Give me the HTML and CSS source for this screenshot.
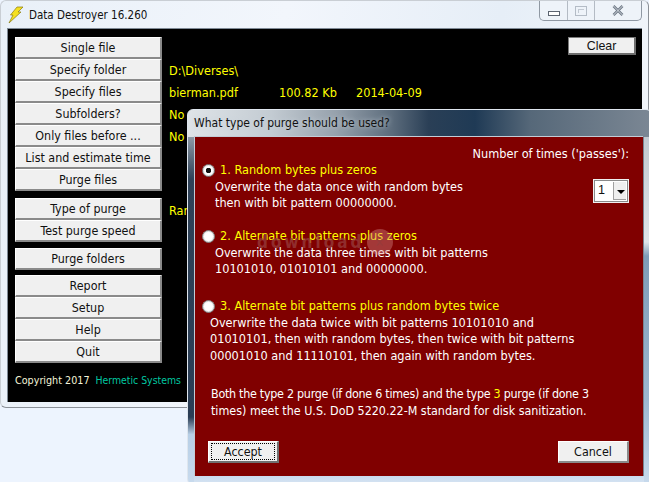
FILE: index.html
```html
<!DOCTYPE html>
<html lang="en">
<head>
    <meta charset="UTF-8">
    <title>Data Destroyer</title>
    <link rel="stylesheet" href="styles.css">
</head>
<body>

<div class="main-window">
    <div class="titlebar">
        <svg class="app-icon" width="16" height="18" viewBox="0 0 16 18">
            <path d="M9 1 L15 1 L10 6 L13 6 L1 17 L5 9 L2.5 9 Z" fill="#f5e020" stroke="#8a7a10" stroke-width="0.7"/>
        </svg>
        <span class="app-title">Data Destroyer 16.260</span>
        <div class="win-controls">
            <div class="win-btn min"><i></i></div>
            <div class="win-btn max"><i></i></div>
            <div class="win-btn close">
                <svg width="12" height="11" viewBox="0 0 12 11">
                    <path d="M1.5 1 L10.5 10 M10.5 1 L1.5 10" stroke="#6c7684" stroke-width="2.6"/>
                    <path d="M1.5 1 L10.5 10 M10.5 1 L1.5 10" stroke="#eef2f6" stroke-width="0.8"/>
                </svg>
            </div>
        </div>
    </div>

    <div class="panel">
        <div class="side">
            <div class="btn-group">
                <div class="btn">Single file</div>
                <div class="btn">Specify folder</div>
                <div class="btn">Specify files</div>
                <div class="btn">Subfolders?</div>
                <div class="btn">Only files before ...</div>
                <div class="btn">List and estimate time</div>
                <div class="btn">Purge files</div>
            </div>
            <div class="btn-group">
                <div class="btn">Type of purge</div>
                <div class="btn">Test purge speed</div>
            </div>
            <div class="btn-group">
                <div class="btn">Purge folders</div>
            </div>
            <div class="btn-group">
                <div class="btn">Report</div>
                <div class="btn">Setup</div>
                <div class="btn">Help</div>
                <div class="btn">Quit</div>
            </div>
            <div class="copyright">Copyright 2017<span class="company">Hermetic Systems</span></div>
        </div>

        <div class="info">
            <div class="info-row clear-row"><div class="btn clear">Clear</div></div>
            <div class="info-row">D:\Diverses\</div>
            <div class="info-row file-row">
                <span class="file-name">bierman.pdf</span>
                <span class="file-size">100.82 Kb</span>
                <span>2014-04-09</span>
            </div>
            <div class="info-row">No</div>
            <div class="info-row">No</div>
            <div class="info-row"></div>
            <div class="info-row"></div>
            <div class="info-row purge-type">Random</div>
        </div>
    </div>
</div>

<div class="dialog">
    <div class="dialog-title">What type of purge should be used?</div>
    <div class="dialog-body">
        <div class="passes">Number of times ('passes'):</div>

        <div class="option first">
            <div class="option-head"><span class="radio checked"></span>1. Random bytes plus zeros</div>
            <p class="indent">Overwrite the data once with random bytes<br>then with bit pattern 00000000.</p>
        </div>

        <div class="combo">
            <span class="combo-value">1</span>
            <span class="combo-arrow"></span>
        </div>

        <div class="option second">
            <div class="option-head"><span class="radio"></span>2. Alternate bit patterns plus zeros</div>
            <p class="indent">Overwrite the data three times with bit patterns<br>10101010, 01010101 and 00000000.</p>
        </div>

        <div class="option third">
            <div class="option-head"><span class="radio"></span>3. Alternate bit patterns plus random bytes twice</div>
            <p>Overwrite the data twice with bit patterns 10101010 and<br>01010101, then with random bytes, then twice with bit patterns<br>00001010 and 11110101, then again with random bytes.</p>
        </div>

        <p class="standard"><span class="tight">Both the type 2 purge (if done 6 times) and the type <span class="hl">3</span> purge (if done 3</span><br>times) meet the U.S. DoD 5220.22-M standard for disk sanitization.</p>

        <div class="dialog-actions">
            <div class="btn accept"><span>Accept</span></div>
            <div class="btn cancel">Cancel</div>
        </div>

        <div class="watermark">download<span class="wm-dot">✕</span></div>
    </div>
</div>

</body>
</html>
```

FILE: styles.css
```css
*{
    margin: 0;
    padding: 0;
    box-sizing: border-box;
}

body{
    position: relative;
    width: 649px;
    height: 482px;
    overflow: hidden;
    background-color: #edf4fe;
    font-family: "DejaVu Sans Condensed", "DejaVu Sans", sans-serif;
    font-size: 12.6px;
    color: #fff;
}

/* main window */
.main-window{
    position: absolute;
    top: 0;
    left: 0;
    width: 649px;
    height: 408px;
    padding: 0 6px;
    background: linear-gradient(100deg, #e9f0f8 0%, #f2f6fc 40%, #e6eef7 70%, #f4f7fb 100%);
    border: 1px solid #8b9097;
    border-top-color: #c9ced4;
    border-left-color: #c9ced4;
    border-radius: 6px;
}

.titlebar{
    display: flex;
    align-items: center;
    height: 27px;
    color: #111;
}

.app-icon{
    margin: 0 5px 0 1px;
}

.app-title{
    font-size: 11.5px;
}

.win-controls{
    display: flex;
    align-self: flex-start;
    margin-left: auto;
    margin-right: 0;
    height: 20px;
    border: 1px solid #8f98a3;
    border-top: 0;
    border-radius: 0 0 5px 5px;
    background-color: #eef3f9;
}

.win-btn{
    display: flex;
    align-items: center;
    justify-content: center;
    border-right: 1px solid #b4bbc4;
}

.win-btn:last-child{
    border-right: 0;
}

.min{
    width: 28px;
}

.min i{
    width: 12px;
    height: 5px;
    margin-top: 6px;
    background-color: #fff;
    border: 1px solid #5c6470;
}

.max{
    width: 27px;
}

.max i{
    width: 12px;
    height: 10px;
    border: 1px solid #b4bcc6;
    box-shadow: inset 2px 2px 0 #eef3f9, inset -2px -2px 0 #eef3f9, inset 3px 3px 0 #c2c9d2;
}

.close{
    width: 46px;
}

.panel{
    display: flex;
    height: 374px;
    padding: 8px 8px 8px 7px;
    background-color: #000;
    border: 1px solid #7f8a96;
    border-width: 1px 0 0 1px;
}

/* buttons */
.side{
    display: flex;
    flex-direction: column;
    flex: none;
    width: 147px;
}

.btn-group{
    display: flex;
    flex-direction: column;
    margin-bottom: 6px;
}

.btn-group:first-child{
    margin-bottom: 7px;
}

.btn-group:nth-child(3){
    margin-bottom: 5px;
}

.btn{
    display: flex;
    align-items: center;
    justify-content: center;
    height: 22px;
    background-color: #f0f0f0;
    border: 1px solid #fff;
    border-right: 2px solid #8a8a8a;
    border-bottom: 2px solid #8a8a8a;
    color: #111;
    font-size: 12.4px;
}

.copyright{
    margin-top: 5px;
    white-space: nowrap;
    font-size: 10.7px;
    color: #f4f4d8;
}

.company{
    margin-left: 6px;
    font-size: 10.4px;
    color: #00c8a0;
}

/* yellow values beside the buttons */
.info{
    flex: 1;
    margin-left: 7px;
    color: #ffff00;
}

.info-row{
    display: flex;
    align-items: center;
    height: 22px;
}

.clear-row{
    align-items: flex-start;
    justify-content: flex-end;
    margin-right: -2px;
}

.clear{
    width: 68px;
    height: 18px;
    border: 1px solid #fff;
    border-top-color: #7a7a7a;
    border-left-color: #7a7a7a;
    border-right: 2px solid #6e6e6e;
    border-bottom: 2px solid #6e6e6e;
    font-family: "Liberation Sans", sans-serif;
}

.file-name{
    width: 110px;
}

.file-size{
    width: 77px;
}

.purge-type{
    margin-top: 8px;
}

/* purge dialog */
.dialog{
    position: absolute;
    top: 109px;
    left: 187px;
    width: 465px;
    height: 376px;
    padding: 0 8px 8px 6px;
    background:
        linear-gradient(180deg, #8d99a5 0, #2f4258 12%, #2a3d55 80%, #b8cfe6 85%, #c9dbee 100%) 0 27px / 6px 350px no-repeat,
        linear-gradient(180deg, #c2c9d0 0, #dfe5ea 30%, #7f9db8 34%, #9db8d0 75%, #c9dbee 100%) 456px 27px / 9px 350px no-repeat,
        linear-gradient(180deg, #c9dbee, #d9e6f3) 0 366px / 100% 10px no-repeat,
        linear-gradient(90deg, #dfe4e8 0%, #c3cbd2 18%, #96a1ac 32%, #5c6c7c 44%, #2a3f56 52%, #1f3a55 62%, #566879 74%, #7b8794 100%);
    border: 1px solid #dfe6ee;
    border-radius: 6px;
}

.dialog-title{
    display: flex;
    align-items: center;
    height: 26px;
    font-size: 12px;
    color: #111;
    text-shadow: 0 0 5px #c9d3dc;
}

.dialog-body{
    position: relative;
    height: 340px;
    width: 449px;
    background-color: #800000;
    border: 1px solid #c3ccd6;
    border-width: 1px 0 0 1px;
}

.passes{
    position: absolute;
    top: 9px;
    right: 14px;
}

.option{
    position: absolute;
    left: 7px;
    line-height: 16.5px;
}

.first{
    top: 25px;
}

.second{
    top: 91px;
}

.third{
    top: 161px;
}

.option-head{
    display: flex;
    align-items: center;
    color: #ffff00;
}

.radio{
    width: 13px;
    height: 13px;
    margin-right: 5px;
    flex: none;
    border-radius: 50%;
    background-color: #fff;
    border: 1px solid #7d7d7d;
    box-shadow: inset 0 0 0 1px #e2e2e2;
}

.checked{
    background: radial-gradient(circle, #111 0, #111 2.5px, #fff 3px);
}

.indent{
    margin-left: 13px;
}

.third p{
    margin-left: 8px;
}

.combo{
    position: absolute;
    top: 42px;
    left: 398px;
    display: flex;
    width: 36px;
    height: 24px;
    padding: 1px;
    background-color: #fff;
    border: 1px solid #f0f0f0;
    box-shadow: inset 0 0 0 1px #8a8a8a;
    color: #111;
}

.combo-value{
    width: 17px;
    padding: 2px 0 0 3px;
    font-family: "Liberation Sans", sans-serif;
}

.combo-arrow{
    position: relative;
    flex: 1;
    margin: 1px;
    background-color: #efefef;
    border-left: 1px solid #a0a0a0;
    border-bottom: 1px solid #a0a0a0;
}

.combo-arrow::after{
    content: "";
    position: absolute;
    top: 8px;
    left: 3px;
    border: 4px solid transparent;
    border-top: 4px solid #000;
    border-bottom: 0;
}

.standard{
    position: absolute;
    top: 249px;
    left: 16px;
    line-height: 16.5px;
    white-space: nowrap;
    font-size: 12.4px;
}

.tight{
    letter-spacing: -0.27px;
}

.hl{
    color: #ffff00;
}

.dialog-actions{
    position: absolute;
    top: 304px;
    left: 13px;
    display: flex;
    justify-content: space-between;
    width: 421px;
}

.accept,
.cancel{
    width: 71px;
    height: 22px;
}

.accept{
    padding: 2px;
    border: 1px solid #fff;
    border-right: 2px solid #707070;
    border-bottom: 2px solid #707070;
}

.accept span{
    flex: 1;
    text-align: center;
    border: 1px dotted #000;
}

.watermark{
    position: absolute;
    top: 92px;
    left: 62px;
    display: flex;
    align-items: center;
    font-size: 17px;
    font-weight: bold;
    letter-spacing: 3px;
    color: rgba(150, 60, 60, 0.75);
}

.wm-dot{
    display: flex;
    align-items: center;
    justify-content: center;
    width: 26px;
    height: 26px;
    margin-left: 2px;
    border-radius: 50%;
    font-size: 13px;
    letter-spacing: 0;
    background-color: rgba(215, 140, 140, 0.4);
    color: rgba(150, 60, 60, 0.8);
}
```
